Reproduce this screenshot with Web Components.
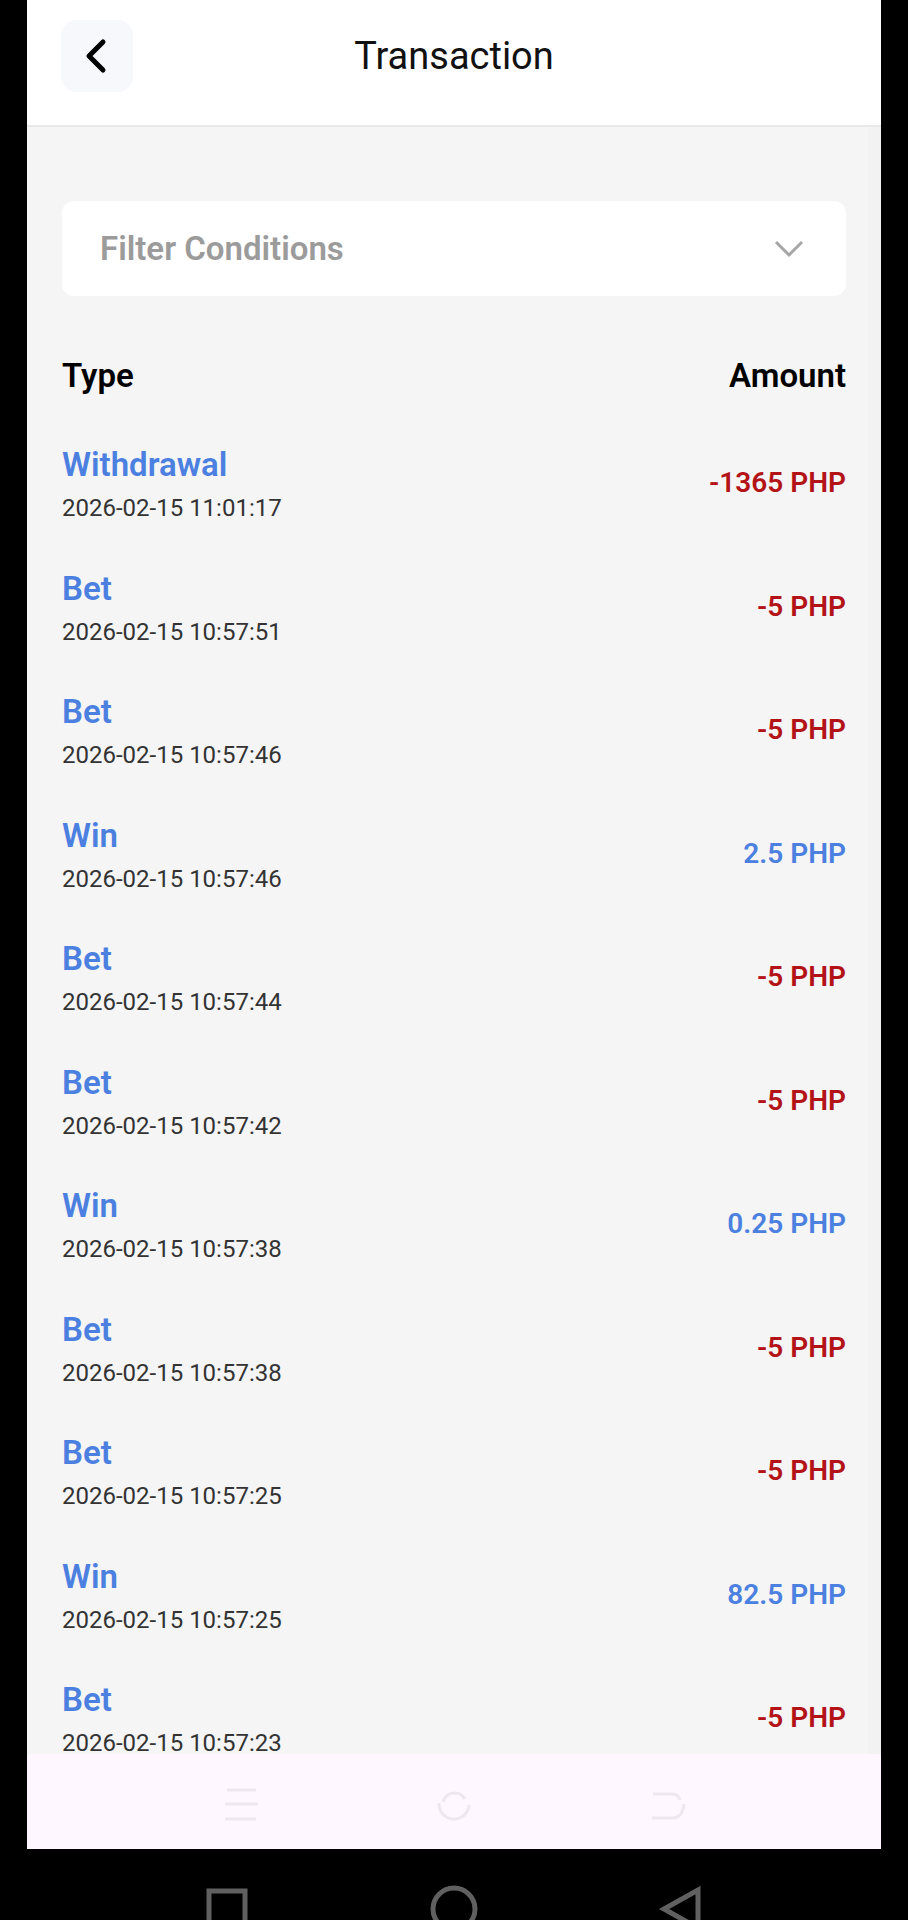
<!DOCTYPE html>
<html lang="en">
<head>
<meta charset="utf-8">
<meta name="viewport" content="width=device-width, initial-scale=1">
<title>Transaction</title>
<style>
    body {
        margin: 0;
        background: #000;
        font-family: Roboto, "Liberation Sans", sans-serif;
    }
</style>
</head>
<body>
<c-phone>
    <c-header>Transaction</c-header>
    <c-filter>Filter Conditions</c-filter>
    <c-transactions></c-transactions>
    <c-app-nav slot="nav"></c-app-nav>
    <c-system-nav slot="system"></c-system-nav>
</c-phone>

<script>
(function() {

    function makeTemplate(html) {
        const template = document.createElement('template');
        template.innerHTML = html;
        return template;
    }

    //every element clones its template the same way
    class Base extends HTMLElement {
        constructor() {
            super();
            this.attachShadow({mode: 'open'});
            this.shadowRoot.appendChild(this.constructor.template.content.cloneNode(true));
        }
    }


    class Phone extends Base {}
    Phone.template = makeTemplate(`
        <style>
            :host {
                display: flex;
                flex-direction: column;
                min-height: 100vh;
            }
            .screen {
                flex: 1;
                display: flex;
                flex-direction: column;
                margin: 0 27px;
                background: #f5f5f5;
            }
            main {
                flex: 1;
                display: flex;
                flex-direction: column;
                background: linear-gradient(#f2f2f2, #f2f2f2) right / 13px 100% no-repeat;
            }
        </style>
        <div class="screen">
            <main><slot></slot></main>
            <slot name="nav"></slot>
        </div>
        <slot name="system"></slot>
    `);


    class Header extends Base {}
    Header.template = makeTemplate(`
        <style>
            :host {
                display: grid;
                grid-template-columns: 72px 1fr 72px;
                align-items: center;
                padding: 20px 34px 33px;
                background: #fff;
                border-bottom: 2px solid #e9e9e9;
            }
            button {
                display: flex;
                align-items: center;
                justify-content: center;
                height: 72px;
                padding: 0;
                border: 0;
                border-radius: 16px;
                background: #f6f8fc;
            }
            h1 {
                margin: 0;
                font-size: 38px;
                line-height: 40px;
                font-weight: 400;
                text-align: center;
                color: #111;
            }
        </style>
        <button type="button" aria-label="Back">
            <svg width="24" height="36" viewBox="0 0 24 36" fill="none" stroke="#000" stroke-width="5" stroke-linecap="round" stroke-linejoin="round">
                <path d="M18 4 4 18 18 32"/>
            </svg>
        </button>
        <h1><slot></slot></h1>
    `);


    class Filter extends Base {}
    Filter.template = makeTemplate(`
        <style>
            :host {
                display: block;
                padding: 74px 35px 60px;
            }
            button {
                display: flex;
                align-items: center;
                justify-content: space-between;
                width: 100%;
                height: 95px;
                padding: 0 42px 0 38px;
                border: 0;
                border-radius: 12px;
                background: #fff;
                font: 600 33px/40px Roboto, "Liberation Sans", sans-serif;
                color: #9b9b9b;
            }
        </style>
        <button type="button" aria-expanded="false">
            <span><slot></slot></span>
            <svg width="30" height="18" viewBox="0 0 30 18" fill="none" stroke="#a6a6a6" stroke-width="3">
                <path d="M2 2 15 15 28 2"/>
            </svg>
        </button>
    `);


    class Amount extends Base {
        static get observedAttributes() {
            return ['value'];
        }

        attributeChangedCallback(name, oldVal, newVal) {
            this.shadowRoot.querySelector('span').textContent = newVal + ' PHP';
            this.toggleAttribute('negative', Number(newVal) < 0);
        }
    }
    Amount.template = makeTemplate(`
        <style>
            :host {
                display: block;
                font-size: 28px;
                line-height: 36px;
                font-weight: 600;
                color: #4b80e0;
            }
            :host([negative]) {
                color: #b31217;
            }
        </style>
        <span></span>
    `);


    const transactions = [
        ['Withdrawal', '2026-02-15 11:01:17', '-1365'],
        ['Bet', '2026-02-15 10:57:51', '-5'],
        ['Bet', '2026-02-15 10:57:46', '-5'],
        ['Win', '2026-02-15 10:57:46', '2.5'],
        ['Bet', '2026-02-15 10:57:44', '-5'],
        ['Bet', '2026-02-15 10:57:42', '-5'],
        ['Win', '2026-02-15 10:57:38', '0.25'],
        ['Bet', '2026-02-15 10:57:38', '-5'],
        ['Bet', '2026-02-15 10:57:25', '-5'],
        ['Win', '2026-02-15 10:57:25', '82.5'],
        ['Bet', '2026-02-15 10:57:23', '-5']
    ];

    class Transactions extends Base {
        connectedCallback() {
            const body = this.shadowRoot.querySelector('tbody');
            body.textContent = '';
            transactions.forEach(([type, date, amount]) => {
                const row = body.insertRow();
                const info = row.insertCell();
                const name = document.createElement('strong');
                const time = document.createElement('time');
                name.textContent = type;
                time.textContent = date;
                time.setAttribute('datetime', date);
                info.append(name, time);

                const value = document.createElement('c-amount');
                value.setAttribute('value', amount);
                row.insertCell().appendChild(value);
            });
        }
    }
    Transactions.template = makeTemplate(`
        <style>
            :host {
                flex: 1;
                display: flex;
                flex-direction: column;
                padding: 0 35px;
            }
            table, tbody {
                flex: 1;
                display: flex;
                flex-direction: column;
            }
            tr {
                display: flex;
                justify-content: space-between;
                align-items: center;
            }
            /* rows share whatever height is left on the screen */
            tbody tr {
                flex: 1 0 auto;
                align-items: flex-end;
            }
            th, td {
                padding: 0;
            }
            th {
                font-size: 33px;
                line-height: 40px;
                font-weight: 600;
                color: #000;
            }
            td:last-child {
                padding-bottom: 18px;
            }
            strong, time {
                display: block;
            }
            strong {
                margin-bottom: 10px;
                font-size: 33px;
                line-height: 44px;
                font-weight: 600;
                color: #4b80e0;
            }
            time {
                font-size: 24px;
                line-height: 22px;
                color: #333;
            }
        </style>
        <table>
            <thead>
                <tr><th scope="col">Type</th><th scope="col">Amount</th></tr>
            </thead>
            <tbody></tbody>
        </table>
    `);


    class AppNav extends Base {}
    AppNav.template = makeTemplate(`
        <style>
            :host {
                display: flex;
                justify-content: space-around;
                align-items: center;
                height: 95px;
                padding: 6px 12.5% 0;
                box-sizing: border-box;
                background: #fef7ff;
            }
            button {
                display: flex;
                padding: 0;
                border: 0;
                background: none;
            }
            svg {
                fill: none;
                stroke: #eee7ef;
                stroke-width: 3;
            }
        </style>
        <button type="button" aria-label="Menu">
            <svg width="36" height="36" viewBox="0 0 36 36"><path d="M4 3H33M2 17H35M2 32H33"/></svg>
        </button>
        <button type="button" aria-label="Home">
            <svg width="36" height="36" viewBox="0 0 36 36"><path d="M7 15A12 12 0 0 1 29 12M3 16A15 15 0 1 0 33 18"/></svg>
        </button>
        <button type="button" aria-label="Back">
            <svg width="36" height="36" viewBox="0 0 36 36"><path d="M3 7H22Q28 7 30 13M34 17C33 27 28 31 23 31H2"/></svg>
        </button>
    `);


    class SystemNav extends Base {}
    SystemNav.template = makeTemplate(`
        <style>
            :host {
                display: flex;
                justify-content: space-around;
                height: 71px;
                padding: 36px 12.5% 0;
                box-sizing: border-box;
                overflow: hidden;
            }
            button {
                display: flex;
                padding: 0;
                border: 0;
                background: none;
            }
            svg {
                fill: none;
                stroke: #606060;
                stroke-width: 5;
            }
        </style>
        <button type="button" aria-label="Recent apps">
            <svg width="48" height="48" viewBox="0 0 48 48"><rect x="6" y="6" width="36" height="36"/></svg>
        </button>
        <button type="button" aria-label="Home">
            <svg width="48" height="48" viewBox="0 0 48 48"><circle cx="24" cy="24" r="21"/></svg>
        </button>
        <button type="button" aria-label="Back">
            <svg width="48" height="48" viewBox="0 0 48 48"><path d="M41 5V43L7 24Z"/></svg>
        </button>
    `);


    customElements.define('c-phone', Phone);
    customElements.define('c-header', Header);
    customElements.define('c-filter', Filter);
    customElements.define('c-amount', Amount);
    customElements.define('c-transactions', Transactions);
    customElements.define('c-app-nav', AppNav);
    customElements.define('c-system-nav', SystemNav);
})();
</script>
</body>
</html>
